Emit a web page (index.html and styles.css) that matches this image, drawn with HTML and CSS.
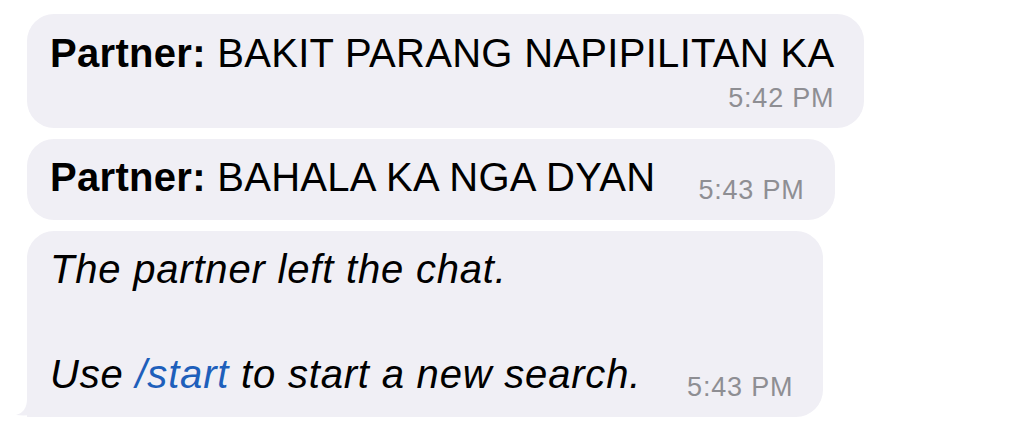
FILE: index.html
```html
<!DOCTYPE html>
<html>
<head>
<meta charset="utf-8">
<link rel="stylesheet" href="styles.css">
</head>
<body>
<div class="chat">
  <div class="bubble stacked">
    <p class="text"><b>Partner:</b> BAKIT PARANG NAPIPILITAN KA</p>
    <span class="time">5:42 PM</span>
  </div>
  <div class="bubble inline">
    <p class="text"><b>Partner:</b> BAHALA KA NGA DYAN</p>
    <span class="time">5:43 PM</span>
  </div>
  <div class="bubble inline with-tail">
    <p class="text italic">The partner left the chat.<br><br>Use <a class="cmd">/start</a> to start a new search.</p>
    <span class="time time-last">5:43 PM</span>
    <svg class="tail" width="40" height="26" viewBox="0 0 40 26"><path d="M11 0 L11 8 Q11 21 0 24 Q14 25.5 24 21.5 Q32 26 40 26 L40 0 Z" fill="#f0eff5"/></svg>
  </div>
</div>
</body>
</html>
```

FILE: styles.css
```css
* { box-sizing: border-box; }
html, body { margin: 0; padding: 0; background: #ffffff; }
body { font-family: "Liberation Sans", Arial, sans-serif; color: #000; }

.chat {
  display: flex;
  flex-direction: column;
  align-items: flex-start;
  gap: 10.5px;
  padding: 14px 0 0 27px;
}

.bubble {
  position: relative;
  display: flex;
  background: #f0eff5;
  border-radius: 27px;
  padding: 13px 30px 14px 23px;
}

.text {
  margin: 0;
  font-size: 40px;
  line-height: 52.5px;
  letter-spacing: 0.3px;
  white-space: nowrap;
}
.text b { font-weight: 700; }

.italic { font-style: italic; letter-spacing: 0.8px; }
.cmd { color: #1e5fbb; text-decoration: none; }

.time {
  font-size: 27px;
  line-height: 32px;
  letter-spacing: 0.8px;
  color: #8e8e93;
  white-space: nowrap;
}

.stacked { flex-direction: column; }
.stacked .time { align-self: flex-end; margin-top: 2.5px; }

.inline { align-items: flex-end; padding-top: 12px; }
.inline .text { margin-bottom: 3px; }
.inline .time { margin-left: 43px; }
.inline .time-last { margin-left: 46px; }

.with-tail { border-bottom-left-radius: 0; }
.tail {
  position: absolute;
  left: -11px;
  bottom: 0;
  display: block;
}
```
